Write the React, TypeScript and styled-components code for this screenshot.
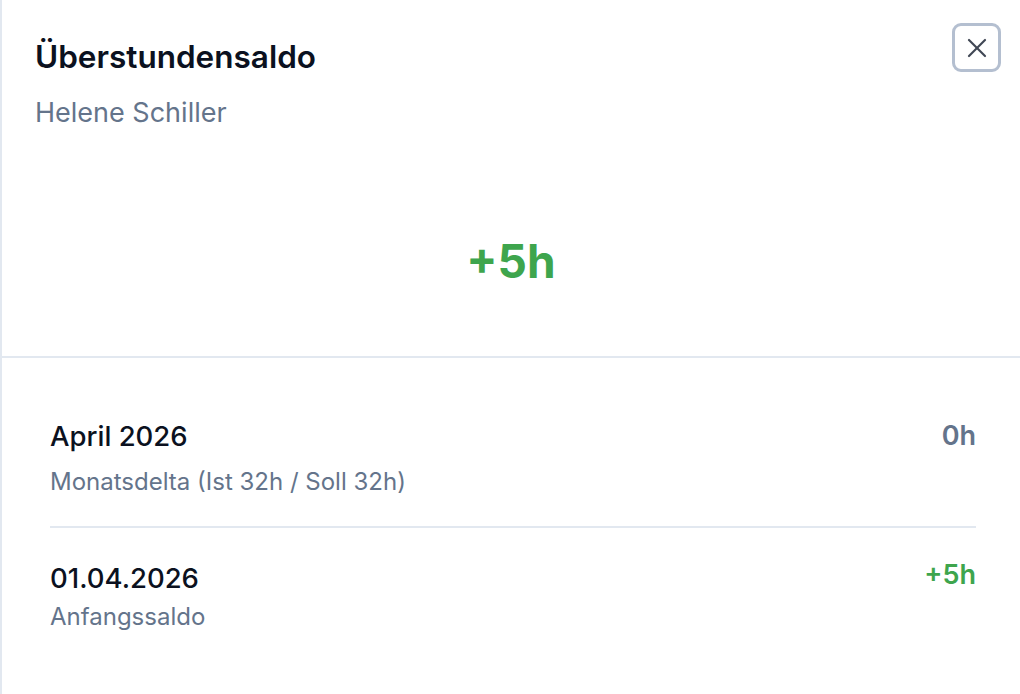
import React from "react";
import styled, { createGlobalStyle } from "styled-components";

const Global = createGlobalStyle`
  html, body { margin: 0; padding: 0; background: #ffffff; }
  body { font-family: Inter, "Noto Sans", sans-serif; -webkit-font-smoothing: antialiased; }
`;

type Tone = "pos" | "neutral";
const toneColor = (t: Tone) => (t === "pos" ? "#3ea54d" : "#64748b");

const Sheet = styled.div`
  box-sizing: border-box;
  width: 1020px;
  height: 694px;
  border-left: 2px solid #e2e8f0;
  background: #ffffff;
  display: flex;
  flex-direction: column;
  overflow: hidden;
`;

const Header = styled.header`
  display: flex;
  justify-content: space-between;
  align-items: flex-start;
  padding: 23px 19px 0 33px;
`;

const TitleBlock = styled.div`
  display: flex;
  flex-direction: column;
  padding-top: 14px;
`;

const Title = styled.h2`
  margin: 0;
  font-size: 31.5px;
  line-height: 40px;
  font-weight: 600;
  color: #0b1120;
`;

const Subtitle = styled.p`
  margin: 18px 0 0;
  font-size: 27px;
  line-height: 36px;
  color: #64748b;
`;

const CloseButton = styled.button`
  box-sizing: border-box;
  width: 49px;
  height: 49px;
  border: 3px solid #b4bfd0;
  border-radius: 9px;
  background: #ffffff;
  display: flex;
  align-items: center;
  justify-content: center;
  padding: 0;
  color: #3f4654;
`;

const Summary = styled.div`
  display: flex;
  justify-content: center;
  padding: 102px 0 67px;
  border-bottom: 2px solid #e2e8f0;
`;

const BigValue = styled.span<{ $tone: Tone }>`
  font-size: 46px;
  line-height: 56px;
  font-weight: 700;
  color: ${(p) => toneColor(p.$tone)};
`;

const List = styled.div`
  display: flex;
  flex-direction: column;
  padding: 28px 44px 0 48px;
`;

const Row = styled.div<{ $divider?: boolean }>`
  display: flex;
  justify-content: space-between;
  align-items: flex-start;
  padding: ${(p) => (p.$divider ? "32px 0 28px" : "32px 0 0")};
  border-bottom: ${(p) => (p.$divider ? "2px solid #e2e8f0" : "none")};
`;

const RowText = styled.div`
  display: flex;
  flex-direction: column;
`;

const RowTitle = styled.span`
  font-size: 27.5px;
  line-height: 36px;
  font-weight: 500;
  color: #0b1120;
`;

const RowSub = styled.span<{ $gap: number }>`
  margin-top: ${(p) => p.$gap}px;
  font-size: 24px;
  line-height: 32px;
  color: #64748b;
`;

const RowValue = styled.span<{ $tone: Tone; $shift?: number }>`
  margin-top: ${(p) => p.$shift ?? 0}px;
  font-size: 27px;
  line-height: 36px;
  font-weight: 600;
  color: ${(p) => toneColor(p.$tone)};
`;

export default function App() {
  return (
    <>
      <Global />
      <Sheet>
        <Header>
          <TitleBlock>
            <Title>Überstundensaldo</Title>
            <Subtitle>Helene Schiller</Subtitle>
          </TitleBlock>
          <CloseButton aria-label="Schließen">
            <svg width="20" height="20" viewBox="0 0 20 20" fill="none" stroke="currentColor" strokeWidth="2.2" strokeLinecap="round">
              <path d="M2 2 18 18" />
              <path d="M18 2 2 18" />
            </svg>
          </CloseButton>
        </Header>
        <Summary>
          <BigValue $tone="pos">+5h</BigValue>
        </Summary>
        <List>
          <Row $divider>
            <RowText>
              <RowTitle>April 2026</RowTitle>
              <RowSub $gap={12}>Monatsdelta (Ist 32h / Soll 32h)</RowSub>
            </RowText>
            <RowValue $tone="neutral">0h</RowValue>
          </Row>
          <Row>
            <RowText>
              <RowTitle>01.04.2026</RowTitle>
              <RowSub $gap={5}>Anfangssaldo</RowSub>
            </RowText>
            <RowValue $tone="pos" $shift={-3}>+5h</RowValue>
          </Row>
        </List>
      </Sheet>
    </>
  );
}
